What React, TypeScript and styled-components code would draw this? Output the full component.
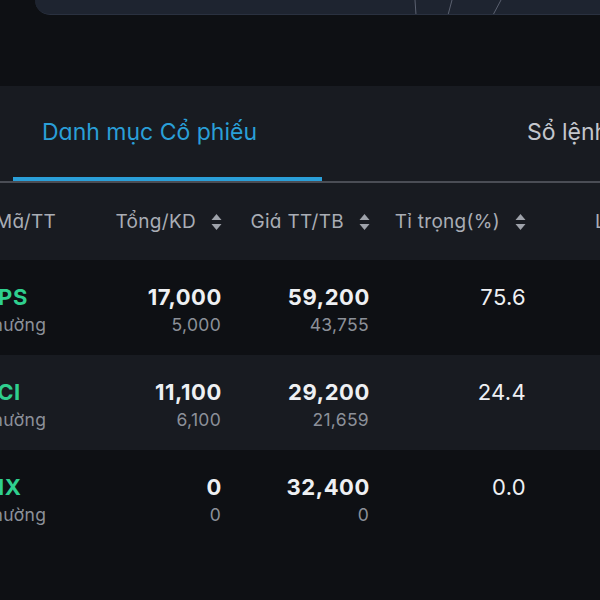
import React from "react";
import styled, { createGlobalStyle } from "styled-components";

const GlobalStyle = createGlobalStyle`
  html, body {
    margin: 0;
    padding: 0;
    background: #0e1014;
    overflow: hidden;
  }
  body {
    font-family: Inter, "Noto Sans", "Liberation Sans", sans-serif;
    font-feature-settings: "cv11";
  }
`;

const Page = styled.div`
  width: 600px;
  height: 600px;
  overflow: hidden;
  background: #0e1014;
`;

const TopCard = styled.div`
  position: relative;
  height: 14px;
  margin-left: 35px;
  background: #1e2430;
  border-bottom: 1px solid #2a3140;
  border-bottom-left-radius: 16px;
  overflow: hidden;
`;

const CardLines = styled.svg`
  position: absolute;
  top: 0;
  left: 0;
`;

const Spacer = styled.div`
  height: 71px;
`;

const TabBar = styled.div`
  display: flex;
  height: 95px;
  background: #181b21;
  border-bottom: 2px solid #4a4d55;
  white-space: nowrap;
`;

const Tab = styled.div<{ $active?: boolean; $offset: number; $width?: number }>`
  flex-shrink: 0;
  margin-left: ${(p) => p.$offset}px;
  width: ${(p) => (p.$width ? `${p.$width}px` : "auto")};
  box-sizing: border-box;
  padding: 30px 0 0 ${(p) => (p.$active ? 29 : 0)}px;
  font-size: 23px;
  line-height: 32px;
  color: ${(p) => (p.$active ? "#2a9fd8" : "#c3c6cc")};
  border-bottom: 4px solid ${(p) => (p.$active ? "#2a9fd8" : "transparent")};
`;

const Table = styled.div`
  margin-left: -19px;
  width: 720px;
`;

const Row = styled.div<{ $bg: string; $height: number }>`
  display: grid;
  grid-template-columns: 119px 122px 148px 156px auto;
  align-items: start;
  height: ${(p) => p.$height}px;
  background: ${(p) => p.$bg};
  box-sizing: border-box;
`;

const HeadRow = styled(Row)`
  align-items: center;
`;

const HeadCell = styled.div<{ $right?: boolean; $pad?: number }>`
  display: flex;
  align-items: center;
  justify-content: ${(p) => (p.$right ? "flex-end" : "flex-start")};
  gap: 15px;
  padding-left: ${(p) => p.$pad ?? 0}px;
  font-size: 19px;
  letter-spacing: 0.3px;
  color: #a9adb5;
  white-space: nowrap;
`;

const Cell = styled.div<{ $right?: boolean }>`
  display: flex;
  flex-direction: column;
  align-items: ${(p) => (p.$right ? "flex-end" : "flex-start")};
  padding-top: 23px;
  white-space: nowrap;
`;

const Main = styled.div<{ $bold?: boolean; $green?: boolean }>`
  font-size: 22px;
  line-height: 28px;
  letter-spacing: ${(p) => (p.$bold ? 0.6 : 0.3)}px;
  font-weight: ${(p) => (p.$bold ? 700 : 400)};
  color: ${(p) => (p.$green ? "#2fcf8e" : "#eef0f3")};
`;

const Sub = styled.div`
  font-size: 17.5px;
  line-height: 28px;
  letter-spacing: 0.3px;
  padding-right: 1px;
  color: #8c9099;
`;

const SortIcon = () => (
  <svg width="11" height="18" viewBox="0 0 11 18">
    <path d="M5.5 1 L10.5 7 H0.5 Z" fill="#9ea2aa" />
    <path d="M5.5 17 L10.5 11 H0.5 Z" fill="#9ea2aa" />
  </svg>
);

type Holding = {
  code: string;
  kind: string;
  total: string;
  avail: string;
  price: string;
  avg: string;
  weight: string;
};

const holdings: Holding[] = [
  { code: "VPS", kind: "Thường", total: "17,000", avail: "5,000", price: "59,200", avg: "43,755", weight: "75.6" },
  { code: "VCI", kind: "Thường", total: "11,100", avail: "6,100", price: "29,200", avg: "21,659", weight: "24.4" },
  { code: "VIX", kind: "Thường", total: "0", avail: "0", price: "32,400", avg: "0", weight: "0.0" },
];

export default function App() {
  return (
    <Page>
      <GlobalStyle />
      <TopCard>
        <CardLines width="565" height="15" viewBox="0 0 565 15">
          <line x1="380" y1="0" x2="381" y2="15" stroke="#5a6170" strokeWidth="1" />
          <line x1="417" y1="0" x2="413" y2="15" stroke="#5a6170" strokeWidth="1" />
          <line x1="466" y1="0" x2="458" y2="15" stroke="#5a6170" strokeWidth="1" />
        </CardLines>
      </TopCard>
      <Spacer />
      <TabBar>
        <Tab $active $offset={13} $width={309}>
          Danh mục Cổ phiếu
        </Tab>
        <Tab $offset={205}>Sổ lệnh</Tab>
      </TabBar>
      <Table>
        <HeadRow $bg="#181b21" $height={77}>
          <HeadCell $pad={14}>Mã/TT</HeadCell>
          <HeadCell $right>
            Tổng/KD <SortIcon />
          </HeadCell>
          <HeadCell $right>
            Giá TT/TB <SortIcon />
          </HeadCell>
          <HeadCell $right>
            Tỉ trọng(%) <SortIcon />
          </HeadCell>
          <HeadCell $pad={69}>Lãi/Lỗ</HeadCell>
        </HeadRow>
        {holdings.map((h, i) => (
          <Row key={h.code} $bg={i % 2 === 0 ? "#0e1014" : "#181b21"} $height={95}>
            <Cell>
              <Main $bold $green>
                {h.code}
              </Main>
              <Sub>{h.kind}</Sub>
            </Cell>
            <Cell $right>
              <Main $bold>{h.total}</Main>
              <Sub>{h.avail}</Sub>
            </Cell>
            <Cell $right>
              <Main $bold>{h.price}</Main>
              <Sub>{h.avg}</Sub>
            </Cell>
            <Cell $right>
              <Main>{h.weight}</Main>
            </Cell>
            <Cell />
          </Row>
        ))}
      </Table>
    </Page>
  );
}
